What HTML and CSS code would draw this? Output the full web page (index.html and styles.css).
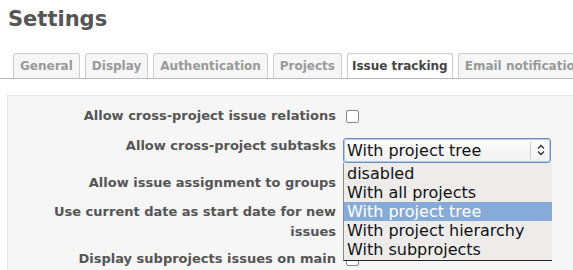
FILE: index.html
```html
<!DOCTYPE html>
<html lang="en">
<head>
  <meta charset="UTF-8">
  <title>Settings</title>
  <link rel="stylesheet" href="styles.css">
</head>
<body>
  <h2 class="page-title">Settings</h2>

  <div class="tabs-wrap">
    <ul class="tabs">
      <li><a href="#">General</a></li>
      <li><a href="#">Display</a></li>
      <li><a href="#">Authentication</a></li>
      <li><a href="#">Projects</a></li>
      <li><a href="#" class="selected">Issue tracking</a></li>
      <li><a href="#">Email notifications</a></li>
    </ul>
  </div>

  <div class="box">
    <div class="tabular">
      <label>Allow cross-project issue relations</label>
      <div class="field"><span class="check"></span></div>

      <label class="label-top">Allow cross-project subtasks</label>
      <div class="field">
        <div class="select">
          <span class="select-value">With project tree</span>
          <span class="select-arrow">
            <svg width="8" height="12" viewBox="0 0 8 12"><path d="M1 4.5 L4 1.5 L7 4.5 M1 7.5 L4 10.5 L7 7.5" fill="none" stroke="#333" stroke-width="1.4"/></svg>
          </span>
        </div>
        <ul class="options">
          <li>disabled</li>
          <li>With all projects</li>
          <li class="active">With project tree</li>
          <li>With project hierarchy</li>
          <li>With subprojects</li>
        </ul>
      </div>

      <label>Allow issue assignment to groups</label>
      <div class="field"><span class="check"></span></div>

      <label>Use current date as start date for new issues</label>
      <div class="field"><span class="check"></span></div>

      <label>Display subprojects issues on main</label>
      <div class="field"><span class="check"></span></div>
    </div>
  </div>
</body>
</html>
```

FILE: styles.css
```css
body {
  font-family: 'DejaVu Sans', Verdana, sans-serif;
  margin: 0;
  padding: 0;
  background: #fff;
  color: #333;
  height: 270px;
  overflow: hidden;
}

.page-title {
  font-size: 21px;
  font-weight: bold;
  color: #555;
  margin: 0;
  padding: 5px 8px 0;
  line-height: 28px;
}

.tabs-wrap {
  margin-top: 20px;
  overflow: hidden;
  border-bottom: 1px solid #bbb;
}

.tabs {
  list-style: none;
  margin: 0 0 -1px;
  padding: 0 0 0 13px;
  display: flex;
  gap: 5px;
  white-space: nowrap;
}

.tabs a {
  display: block;
  font-size: 12px;
  font-weight: bold;
  color: #999;
  text-decoration: none;
  padding: 0 6px;
  line-height: 24px;
  background: #f6f6f6;
  border: 1px solid #ccc;
  border-bottom-color: #bbb;
  border-radius: 3px 3px 0 0;
}

.tabs a.selected {
  color: #444;
  background: #fff;
  border-bottom-color: #fff;
  padding: 0 4px;
}

.box {
  margin: 16px 0 0 7px;
  background: #f6f6f6;
  border: 1px solid #e4e4e4;
  border-right: none;
  height: 175px;
}

.tabular {
  display: grid;
  grid-template-columns: 328px 1fr;
  grid-template-rows: 30px 38px 28px 50px 24px;
  align-items: center;
  padding-top: 5px;
}

.tabular label {
  font-size: 13px;
  font-weight: bold;
  color: #555;
  text-align: right;
  line-height: 20px;
  padding-left: 38px;
}

.tabular .label-top {
  align-self: start;
  padding-top: 5px;
}

.field {
  position: relative;
  height: 100%;
  display: flex;
  align-items: center;
}

.check {
  display: block;
  width: 11px;
  height: 11px;
  margin-left: 10px;
  border: 1px solid #888;
  border-radius: 2px;
  background: #fff;
}

.select {
  display: flex;
  align-items: center;
  margin-left: 7px;
  width: 206px;
  height: 23px;
  border: 1px solid #6d8fc0;
  border-radius: 3px;
  background: linear-gradient(#fdfdfd, #f2f2f2);
  box-shadow: inset 0 0 0 1px #b6c9e6;
  font-size: 16px;
  color: #111;
}

.select-value {
  flex: 1;
  padding-left: 3px;
}

.select-arrow {
  width: 18px;
  height: 17px;
  border-left: 1px solid #ccc;
  display: flex;
  align-items: center;
  justify-content: center;
  padding-left: 1px;
}

.options {
  position: absolute;
  top: 32px;
  left: 7px;
  width: 208px;
  margin: 0;
  padding: 1px 0;
  list-style: none;
  background: #edeceb;
  border-left: 1px solid #8a8a8a;
  border-bottom: 1px solid #222;
  font-size: 16px;
  line-height: 19px;
  color: #111;
  z-index: 2;
}

.options li {
  padding-left: 3px;
  white-space: nowrap;
}

.options li.active {
  background: #86abd9;
  color: #fff;
}
```
